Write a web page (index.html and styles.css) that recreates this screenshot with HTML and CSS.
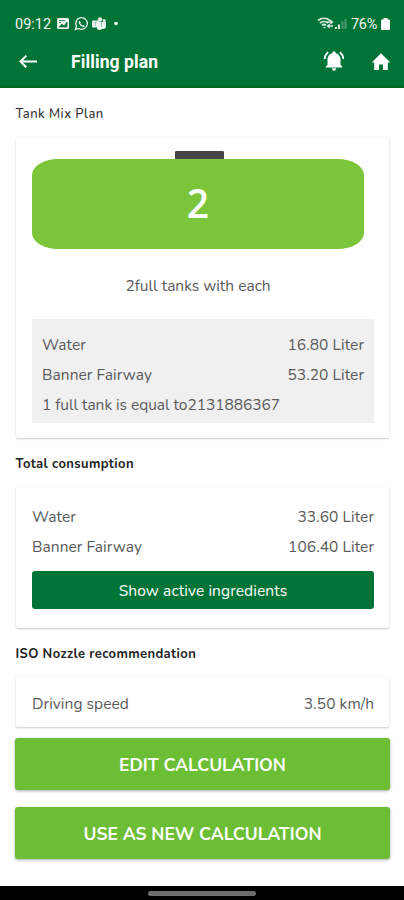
FILE: index.html
```html
<!DOCTYPE html>
<html lang="en">
<head>
<meta charset="utf-8">
<title>Filling plan</title>
<link rel="stylesheet" href="styles.css">
</head>
<body>
<header class="top">
  <div class="status">
    <span class="clock">09:12</span>
    <svg class="notices" width="65" height="16" viewBox="0 0 65 16">
      <rect x="0" y="2" width="12" height="11" rx="1.5" fill="#edf5ef"/>
      <path d="M2 4.500h6M2 6.500h2M2 11l3-3 2 2 3-4v5z" fill="#007437" stroke="#007437" stroke-width=".7"/>
      <path d="M18.500 13.500l1-3.200a5.800 5.800 0 1 1 2.200 2.200z" fill="none" stroke="#edf5ef" stroke-width="1.300"/>
      <path d="M22.300 4.800l1.600 1.900-.6.900 2 2 1-.6 1.700 1.300c-2.500 2.500-7.700-2.300-5.700-5.500z" fill="#edf5ef"/>
      <circle cx="43" cy="3.500" r="2.200" fill="#edf5ef"/><circle cx="47.200" cy="4.500" r="1.500" fill="#edf5ef"/>
      <path d="M40 6h9v4a3 3 0 0 1-3 3h-1a4 4 0 0 1-5 0z" fill="#edf5ef"/>
      <rect x="35" y="4.500" width="7" height="7" rx="1" fill="#edf5ef"/>
      <path d="M37 6.300h3M38.500 6.300v3.700M44.500 6v5" stroke="#8abf9f" stroke-width=".8"/>
      <circle cx="59" cy="7.500" r="1.800" fill="#edf5ef"/>
    </svg>
    <svg class="signal" width="32" height="16" viewBox="0 0 32 16">
      <g fill="none" stroke="#dcebe1" stroke-width="1.700"><path d="M1 4.500q6-4.500 12 0M3 7q4-3 8 0M5 9.300q2-1.600 4 0"/><path d="M10 6h5.500M13.300 4.300L15.500 6l-2.200 1.700M16 10h-5.500M12.700 8.300L10.500 10l2.200 1.700" stroke-width="1.300"/></g>
      <path d="M6 11l1.500 1.500L9 11z" fill="#dcebe1"/>
      <path d="M18 13v-2h2v2zM21 13V8.500h2V13z" fill="#dcebe1"/>
      <path d="M24.500 13V5.500h2V13zM27.500 13V3h2v10z" fill="#4c9b70"/>
    </svg>
    <span class="percent">76%</span>
    <svg class="battery" width="9" height="14" viewBox="0 0 9 14"><path d="M2.500 1h4v1.500H8q1 0 1 1V12q0 1-1 1H1q-1 0-1-1V3.500q0-1 1-1h1.500z" fill="#fff"/></svg>
  </div>
  <div class="appbar">
    <svg class="back" width="20" height="16" viewBox="0 0 20 16"><path d="M19 7.500H2.500M8.300 1.700L2.500 7.500l5.800 5.800" fill="none" stroke="#fff" stroke-width="2"/></svg>
    <h1>Filling plan</h1>
    <svg class="bell" width="22" height="22" viewBox="0 0 22 22"><path d="M9.300 2.200V1.700q0-1.500 1.700-1.500t1.700 1.500v.5c3 .7 4.800 3 4.800 6v5.500l1.700 1.700v1H2.800v-1l1.700-1.700V8.200c0-3 1.800-5.300 4.800-6zM8.800 17.300h4.400q-.4 2.500-2.200 2.500t-2.200-2.500z" fill="#fff"/><path d="M5.200 1.300Q2 3.600 1.700 8M16.800 1.300Q20 3.600 20.300 8" fill="none" stroke="#fff" stroke-width="1.800"/></svg>
    <svg class="home" width="20" height="19" viewBox="0 0 20 19"><path d="M8 17H3.200V9.500H.7L10 .2l9.300 9.300h-2.500V17H12v-5.500H8z" fill="#fff"/></svg>
  </div>
</header>
<main>
  <h2 class="light">Tank Mix Plan</h2>
  <section class="card mix">
    <div class="cap"></div>
    <div class="tank">2</div>
    <p class="each">2full tanks with each</p>
    <div class="contents">
      <div class="row"><span>Water</span><span>16.80 Liter</span></div>
      <div class="row"><span>Banner Fairway</span><span>53.20 Liter</span></div>
      <div class="row"><span class="equal">1 full tank is equal to2131886367</span></div>
    </div>
  </section>
  <h2 class="total">Total consumption</h2>
  <section class="card consumption">
    <div class="row"><span>Water</span><span>33.60 Liter</span></div>
    <div class="row"><span>Banner Fairway</span><span>106.40 Liter</span></div>
    <button class="show">Show active ingredients</button>
  </section>
  <h2 class="nozzle">ISO Nozzle recommendation</h2>
  <section class="card speed">
    <div class="row"><span>Driving speed</span><span>3.50 km/h</span></div>
  </section>
  <button class="action">EDIT CALCULATION</button>
  <button class="action second">USE AS NEW CALCULATION</button>
</main>
<footer class="nav"><span class="handle"></span></footer>
</body>
</html>
```
FILE: styles.css
```css
* { box-sizing: border-box; }
body {
  margin: 0;
  width: 404px;
  height: 900px;
  display: flex;
  flex-direction: column;
  background: #fff;
  color: #5a5a5a;
  font-family: Nunito, Lato, sans-serif;
  overflow: hidden;
}
svg { display: block; flex: none; }
h1, h2, p { margin: 0; }
button { border: 0; padding: 0; color: #fff; font-family: inherit; display: block; }
.top { height: 88px; flex: none; background: #007437; border-bottom: 2px solid #00651f; color: #fff; }
.status { height: 38px; padding: 10px 14px 0 15px; display: flex; align-items: center; font: 14.500px Roboto, sans-serif; color: #edf5ef; }
.clock { width: 42px; }
.signal { margin-left: auto; }
.percent { width: 29px; margin-left: 2px; letter-spacing: -.3px; }
.battery { margin-left: 1px; }
.appbar { height: 48px; display: flex; align-items: center; padding: 0 13px 0 18px; }
h1 { font: 700 17.500px Roboto, sans-serif; margin-left: 33px; letter-spacing: .1px; }
.bell { margin-left: auto; margin-right: 26px; }
main { height: 798px; padding: 0 15px; flex: none; }
h2 { font-size: 13px; line-height: 20px; font-weight: 700; color: #222; letter-spacing: .38px; padding: 16px 0 0 .5px; height: 49px; }
h2.light { font-weight: 500; color: #333; letter-spacing: .45px; }
.card { background: #fff; border-radius: 2px; box-shadow: 0 1px 2px rgba(0,0,0,.2), 0 0 2px rgba(0,0,0,.04); margin: 0 0 0 1px; padding: 0 15px 0 16px; width: 373px; }
.mix { height: 301px; padding-top: 14px; }
.cap { width: 49px; height: 8px; margin-left: 143px; border-radius: 1px 1px 0 0; background: #464549; }
.tank { width: 332px; height: 90px; border-radius: 26px / 16px; background: #7bc53b; color: #fff; font: 600 39px/87px "Open Sans", sans-serif; text-align: center; }
.each { text-align: center; font-size: 15.500px; line-height: 20px; margin-top: 27px; margin-right: 10px; }
.contents { height: 104px; margin-top: 23px; padding: 10px 10px 0; background: #f0f0f0; }
.row { height: 30px; display: flex; align-items: center; justify-content: space-between; font-size: 15.500px; letter-spacing: .06px; }
.equal { letter-spacing: -.04px; }
.consumption { height: 141px; padding-top: 14px; }
.show { width: 342px; height: 38px; margin-top: 10px; padding-top: 1px; border-radius: 3px; background: #007437; font-size: 15.500px; letter-spacing: .1px; }
.speed { height: 50px; padding-top: 11px; }
.action { width: 375px; height: 52px; margin-top: 11px; padding-top: 2px; border-radius: 3px; background: #6cbe34; box-shadow: 0 1px 3px rgba(0,0,0,.35); font-size: 17.500px; font-weight: 700; }
.second { margin-top: 17px; }
.nav { height: 14px; background: #000; display: flex; justify-content: center; padding-top: 5px; }
.handle { width: 108px; height: 5px; border-radius: 3px; background: #6d6d6d; }
```
